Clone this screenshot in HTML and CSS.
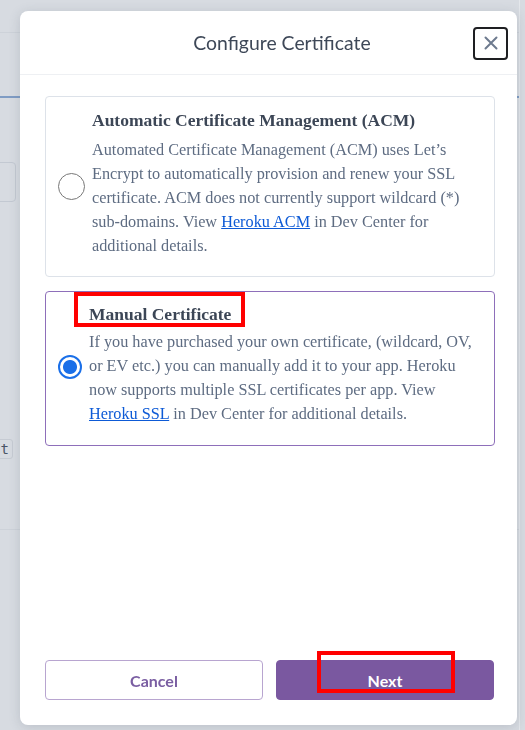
FILE: index.html
```html
<!DOCTYPE html>
<html>
<head>
    <title>Configure Certificate</title>
    <link rel="stylesheet" href="styles.css">
</head>
<body>
    <div class="page">
        <div class="page-main">
            <div class="topbar"></div>
            <div class="tabs"></div>
            <div class="field"></div>
            <div class="tag">t</div>
            <div class="divider"></div>
        </div>
        <div class="page-scroll"></div>
    </div>

    <div class="modal">
        <div class="modal-header">
            <h2 class="modal-title">Configure Certificate</h2>
            <button class="close-btn" type="button" aria-label="Close">
                <svg width="16" height="16" viewBox="0 0 16 16">
                    <path d="M2.5 2.5 L13.5 13.5 M13.5 2.5 L2.5 13.5" stroke="#6d7a8e" stroke-width="2" stroke-linecap="round" fill="none"/>
                </svg>
            </button>
        </div>

        <div class="modal-body">
            <label class="option option-acm">
                <span class="radio"></span>
                <span class="option-text">
                    <span class="option-title">Automatic Certificate Management (ACM)</span>
                    <span class="option-desc">Automated Certificate Management (ACM) uses Let’s Encrypt to automatically provision and renew your SSL certificate. ACM does not currently support wildcard (*) sub-domains. View <a href="#">Heroku ACM</a> in Dev Center for additional details.</span>
                </span>
            </label>

            <label class="option option-manual selected">
                <span class="radio checked"></span>
                <span class="option-text">
                    <span class="option-title marked">Manual Certificate</span>
                    <span class="option-desc">If you have purchased your own certificate, (wildcard, OV, or EV etc.) you can manually add it to your app. Heroku now supports multiple SSL certificates per app. View <a href="#">Heroku SSL</a> in Dev Center for additional details.</span>
                </span>
            </label>
        </div>

        <div class="modal-footer">
            <button class="btn btn-cancel" type="button">Cancel</button>
            <button class="btn btn-next marked" type="button">Next</button>
        </div>
    </div>
</body>
</html>
```

FILE: styles.css
```css
html, body { margin: 0; height: 100%; }
body { background: #d7dbe1; font-family: Lato, "Noto Sans", sans-serif; overflow: hidden; }

/* page behind the overlay */
.page { display: grid; grid-template-columns: 1fr 6px; height: 730px; }
.page-scroll { border-left: 1px solid #e4e7eb; }
.topbar { height: 32px; border-bottom: 1px solid #cdd2d9; }
.tabs { height: 63px; border-bottom: 2px solid #7f9cc4; }
.field { width: 20px; height: 38px; margin: 64px 0 0 -6px; border: 1px solid #c3c9d2; border-radius: 4px; }
.tag { width: 22px; margin: 237px 0 0 -9px; border: 1px solid #c6cbd3; border-radius: 3px; font-family: "DejaVu Sans Mono", monospace; font-size: 14px; line-height: 18px; color: #4a5566; text-align: right; padding-right: 3px; box-sizing: border-box; }
.divider { margin-top: 70px; border-top: 1px solid #cdd2d9; }

/* modal */
.modal { position: fixed; top: 11px; left: 20px; width: 497px; height: 714px; background: #fff; border-radius: 8px; box-shadow: 0 2px 12px rgba(60,70,90,0.18); display: flex; flex-direction: column; }
.modal-header { height: 64px; display: flex; align-items: center; padding: 0 9px 0 71px; border-bottom: 1px solid #eef0f3; box-sizing: border-box; flex: none; }
.modal-title { flex: 1; margin: 0; text-align: center; font-weight: normal; font-size: 19.4px; color: #3e4858; }
.close-btn { width: 35px; height: 33px; margin-top: 1px; border: 2px solid #1e1f22; border-radius: 4px; background: #fff; display: flex; align-items: center; justify-content: center; padding: 0; }

.modal-body { flex: 1; padding: 21px 22px 0 25px; display: flex; flex-direction: column; gap: 14px; }

.option { display: flex; align-items: center; gap: 7px; border: 1px solid #dde2e9; border-radius: 4px; padding: 11px 15px 18px 12px; font-family: "Liberation Serif", "Times New Roman", serif; }
.option.selected { border-color: #8e6fba; padding-top: 10px; padding-bottom: 19px; }
.option-text { display: flex; flex-direction: column; gap: 6px; }
.option.selected .option-text { gap: 4px; }
.option-title { font-weight: bold; font-size: 17.5px; line-height: 24px; color: #3c4656; align-self: flex-start; }
.option-desc { font-size: 16.25px; line-height: 24px; color: #5e6c82; }
.option-desc a { color: #0d5ad6; }

.radio { flex: none; width: 27px; height: 27px; border: 1.5px solid #777; border-radius: 50%; box-sizing: border-box; margin-top: 6px; }
.radio.checked { width: 24px; height: 24px; border: 2px solid #1a6fe8; background: radial-gradient(circle, #1a6fe8 6.5px, #fff 7.5px); margin-top: 5px; }

/* red annotation boxes */
.marked { position: relative; }
.marked::after { content: ""; position: absolute; border: 4px solid #ff0000; pointer-events: none; }
.option-title.marked::after { left: -15px; right: -14px; top: -10px; bottom: -1px; }
.btn-next.marked::after { left: 40px; right: 38px; top: -10px; bottom: 6px; }

.modal-footer { display: flex; gap: 13px; padding: 0 23px 25px 25px; flex: none; }
.btn { flex: 1; height: 40px; border-radius: 4px; font-family: Lato, "Noto Sans", sans-serif; font-weight: bold; font-size: 16px; }
.btn-cancel { background: #fff; border: 1px solid #b8a5d0; color: #7a5ea2; }
.btn-next { background: #7a58a0; border: 1px solid #7a58a0; color: #fff; }
```
